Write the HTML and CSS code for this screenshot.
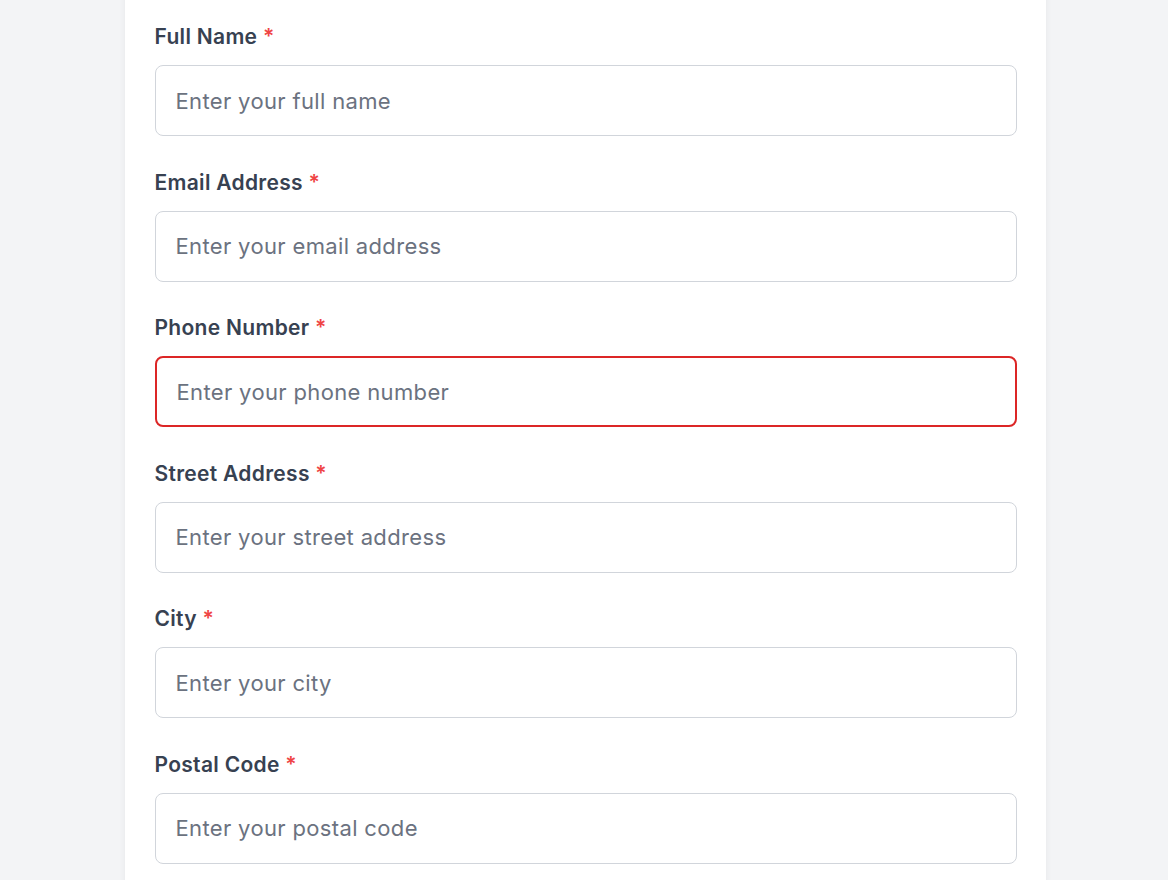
FILE: index.html
```html
<!DOCTYPE html>
<html lang="en">
<head>
    <meta charset="UTF-8">
    <meta name="viewport" content="width=device-width, initial-scale=1.0">
    <title>Contact Details</title>
    <link rel="stylesheet" href="styles.css">
</head>
<body>
    <div class="form-card">
        <form class="details-form">
            <div class="field">
                <label for="full_name">Full Name <span class="req">*</span></label>
                <input type="text" id="full_name" name="full_name" placeholder="Enter your full name">
            </div>
            <div class="field">
                <label for="email">Email Address <span class="req">*</span></label>
                <input type="email" id="email" name="email" placeholder="Enter your email address">
            </div>
            <div class="field">
                <label for="phone">Phone Number <span class="req">*</span></label>
                <input type="tel" id="phone" name="phone" class="invalid" placeholder="Enter your phone number">
            </div>
            <div class="field">
                <label for="street">Street Address <span class="req">*</span></label>
                <input type="text" id="street" name="street" placeholder="Enter your street address">
            </div>
            <div class="field">
                <label for="city">City <span class="req">*</span></label>
                <input type="text" id="city" name="city" placeholder="Enter your city">
            </div>
            <div class="field">
                <label for="postal_code">Postal Code <span class="req">*</span></label>
                <input type="text" id="postal_code" name="postal_code" placeholder="Enter your postal code">
            </div>
        </form>
    </div>
</body>
</html>
```

FILE: styles.css
```css
body {
    font-family: Inter, "Noto Sans", sans-serif;
    background-color: #f3f4f6;
    margin: 0;
    padding-left: 2px;
    display: flex;
    justify-content: center;
}

.form-card {
    width: 921px;
    box-sizing: border-box;
    margin-top: -40px;
    padding: 63px 29px 40px 30px;
    background: #fff;
    border-radius: 12px;
    box-shadow: 0 1px 6px rgba(0, 0, 0, 0.06);
}

.field {
    display: flex;
    flex-direction: column;
    margin-bottom: 32.6px;
}

.field label {
    font-size: 21px;
    line-height: 28px;
    font-weight: 600;
    letter-spacing: 0.3px;
    color: #374151;
    margin-bottom: 14px;
}

.field .req {
    color: #ef4444;
}

.field input {
    height: 71px;
    box-sizing: border-box;
    padding: 0 20px;
    font-family: inherit;
    font-size: 22px;
    letter-spacing: 0.35px;
    color: #111827;
    background: #fff;
    border: 1.5px solid #d1d5db;
    border-radius: 8px;
    outline: none;
}

.field input::placeholder {
    color: #6b7280;
}

.field input.invalid {
    border: 2px solid #dc2626;
}
```
